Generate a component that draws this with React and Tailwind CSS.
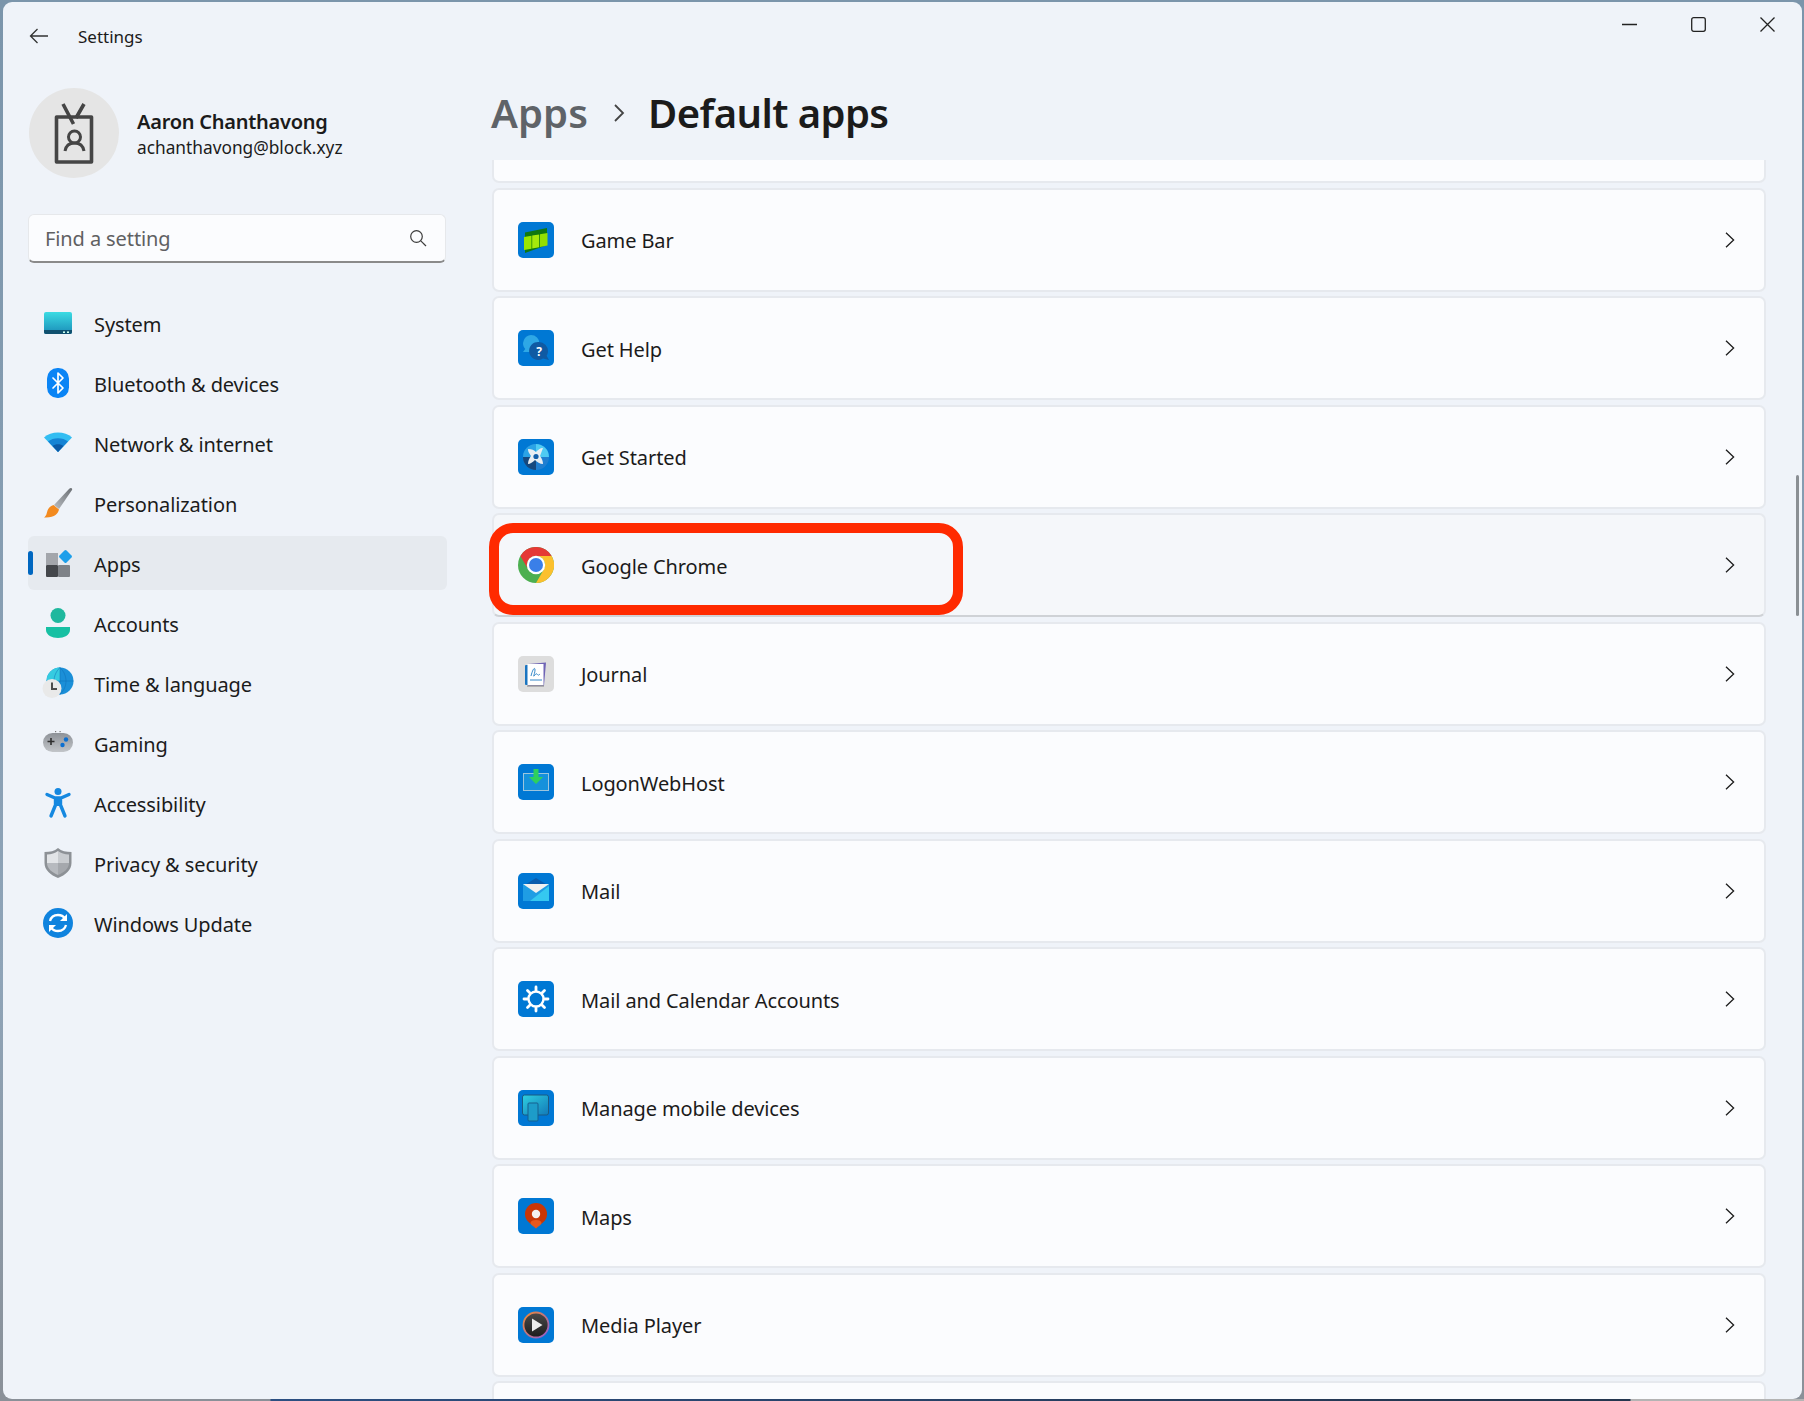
import React from "react";

const S = ({ children, size = 32, box = 32 }) => (
  <svg width={size} height={size} viewBox={`0 0 ${box} ${box}`} className="shrink-0 block">{children}</svg>
);

const SystemIcon = () => (
  <S>
    <defs><linearGradient id="sys" x1="0" y1="0" x2="0" y2="1"><stop offset="0" stopColor="#3bdbe3" /><stop offset="1" stopColor="#1a8db8" /></linearGradient></defs>
    <rect x="2" y="5" width="28" height="22" rx="2" fill="url(#sys)" />
    <path d="M2 23h28v2a2 2 0 0 1-2 2H4a2 2 0 0 1-2-2z" fill="#10506f" />
    <rect x="21" y="24.4" width="2" height="1.6" fill="#cfe" /><rect x="25" y="24.4" width="2" height="1.6" fill="#cfe" />
  </S>
);
const BluetoothIcon = () => (
  <S>
    <rect x="5" y="1" width="22" height="30" rx="10.5" fill="#0a84f5" />
    <path d="M11 11l10 10-5 5V6l5 5-10 10" fill="none" stroke="#fff" strokeWidth="1.7" strokeLinejoin="round" strokeLinecap="round" />
  </S>
);
const WifiIcon = () => (
  <S>
    <path d="M2 10.5C9 3.8 23 3.8 30 10.5L16 25z" fill="#32bdf2" />
    <path d="M6 14.5C11 10 21 10 26 14.5L16 25z" fill="#1583d4" />
    <path d="M10.5 19C13.5 16.6 18.5 16.6 21.5 19L16 25z" fill="#0c5aa6" />
  </S>
);
const BrushIcon = () => (
  <S>
    <defs><linearGradient id="br" x1="1" y1="0" x2="0" y2="1"><stop offset="0" stopColor="#6b6f74" /><stop offset="1" stopColor="#b9bdc2" /></linearGradient></defs>
    <path d="M29 1c1 0 1.500 1 1 2L17 22l-5-4L27 2c.6-.6 1.300-1 2-1z" fill="url(#br)" />
    <path d="M11.500 18l5.500 4.500c-1 4-4 8-13 8H2c3-2 2.500-5 4-8 1-2 3-4 5.500-4.500z" fill="#f38a1f" />
  </S>
);
const AppsIcon = () => (
  <S>
    <rect x="4" y="6" width="12" height="12" fill="#a3a6ab" />
    <rect x="4" y="18" width="12" height="12" rx="1" fill="#44474b" />
    <rect x="16" y="18" width="12" height="12" rx="1" fill="#7e8287" />
    <rect x="18.500" y="4.500" width="10" height="10" rx="1.500" transform="rotate(45 23.500 9.500)" fill="#1d9fea" />
  </S>
);
const AccountIcon = () => (
  <S>
    <circle cx="16" cy="8.500" r="7.500" fill="#1fb89e" />
    <path d="M4 20h24v3c0 5-6 8-12 8S4 28 4 23z" fill="#17c0a3" />
  </S>
);
const TimeIcon = () => (
  <S>
    <circle cx="18" cy="14" r="13.500" fill="#1b8fd8" />
    <path d="M18 .5A13.500 13.500 0 0 0 4.500 14H18z" fill="#35cbe0" />
    <path d="M18 .5v27M4.500 14h27M18 .5c-8 8-8 19 0 27M18 .5c8 8 8 19 0 27" fill="none" stroke="#0f6fb5" strokeWidth=".7" opacity=".7" />
    <circle cx="10" cy="21.500" r="9.500" fill="#e9e9e9" />
    <path d="M10 15.500v6.500h5" fill="none" stroke="#4c4c4c" strokeWidth="2" />
  </S>
);
const GameIcon = () => (
  <S>
    <defs><linearGradient id="gm" x1="0" y1="0" x2="0" y2="1"><stop offset="0" stopColor="#8e9298" /><stop offset="1" stopColor="#c2c5c9" /></linearGradient></defs>
    <rect x="1" y="6" width="30" height="19" rx="9.500" fill="url(#gm)" />
    <path d="M9 11v7M5.500 14.500h7" stroke="#2f2f2f" strokeWidth="1.600" />
    <circle cx="24" cy="12.500" r="2.200" fill="#0d6fd0" /><circle cx="20.500" cy="18" r="2.200" fill="#0d6fd0" />
    <rect x="13" y="4" width="1.200" height="1.200" fill="#777" /><rect x="17.500" y="4" width="1.200" height="1.200" fill="#777" />
  </S>
);
const AccessIcon = () => (
  <S>
    <circle cx="16" cy="4.500" r="3.500" fill="#1588e0" />
    <path d="M5 7.500l8 3.500h6l8-3.500M13.500 11v7L9 29M18.500 11v7L23 29" fill="none" stroke="#1588e0" strokeWidth="3.400" strokeLinecap="round" strokeLinejoin="round" />
    <path d="M13 11h6v8h-6z" fill="#1588e0" />
  </S>
);
const ShieldIcon = () => (
  <S>
    <path d="M16 1c3.500 3 8 4 13.500 4v11c0 7-6 12-13.500 15C8.500 28 2.500 23 2.500 16V5C8 5 12.500 4 16 1z" fill="#8d9196" />
    <path d="M16 4c3 2.500 6.500 3.200 11 3.400V16H16z" fill="#c9ccd0" />
    <path d="M16 4C13 6.500 9.500 7.200 5 7.400V16h11z" fill="#e2e4e7" />
    <path d="M5 16h11v12C10 25.500 5 21.500 5 16z" fill="#b7babf" />
    <path d="M27 16H16v12c6-2.500 11-6.500 11-12z" fill="#a5a8ad" />
  </S>
);
const UpdateIcon = () => (
  <S>
    <circle cx="16" cy="16" r="15" fill="#0f83de" />
    <path d="M8 14c1-4 4.500-6 8-6 3 0 5.500 1.200 7.500 3.800" fill="none" stroke="#fff" strokeWidth="2.300" />
    <path d="M25 7v7h-7z" fill="#fff" />
    <path d="M24 18c-1 4-4.500 6-8 6-3 0-5.500-1.200-7.500-3.800" fill="none" stroke="#fff" strokeWidth="2.300" />
    <path d="M7 25v-7h7z" fill="#fff" />
  </S>
);

const Tile = ({ children, bg = "bg-[#0078d4]" }) => (
  <div className={`w-9 h-9 rounded-[5px] shrink-0 ${bg}`}>
    <S size={36} box={36}>{children}</S>
  </div>
);
const GameBar = () => (
  <Tile>
    <path d="M7 10.500L29 6v17L7 31z" fill="#10780f" />
    <path d="M6 15l7.500-1.300v13L6 28z" fill="#9ae600" />
    <path d="M14.200 13.600l7-1.100v12.700l-7 1.400z" fill="#a6e90c" />
    <path d="M22 12.300l7.500-1.200v12.500L22 25z" fill="#93df00" />
  </Tile>
);
const GetHelp = () => (
  <Tile>
    <path d="M13 5a8.500 8.500 0 0 1 8.500 8.500c0 4.700-3.800 8.500-8.500 8.500H5l2.200-3A8.500 8.500 0 0 1 13 5z" fill="#2ea8e6" />
    <path d="M21 12a9 9 0 0 1 9 9c0 1.800-.5 3.400-1.400 4.800L31 30l-6-1.500A9 9 0 1 1 21 12z" fill="#0f5aa3" />
    <text x="21" y="26" fontSize="12" fontWeight="700" fill="#fff" textAnchor="middle" fontFamily="'Noto Sans',sans-serif">?</text>
  </Tile>
);
const GetStarted = () => (
  <Tile>
    <circle cx="18" cy="18" r="13" fill="#1f7fd1" />
    <path d="M18 5a13 13 0 0 1 13 13H18z" fill="#4fcbf3" />
    <path d="M5 18a13 13 0 0 1 13-13v13z" fill="#2ba3e6" />
    <path d="M5 18h13v13A13 13 0 0 1 5 18z" fill="#15497f" />
    <path d="M10 10c4 0 6 1 8 3 2-2 4-4 7-4-1 3-2 5-3 8 2 3 3 5 3 8-3 0-6-2-8-4-2 2-5 4-7 4 0-3 1-5 3-8-2-3-3-4-3-7z" fill="#e8eef2" />
    <circle cx="18" cy="17.500" r="2.600" fill="#115ea8" />
  </Tile>
);
const Chrome = () => (
  <S size={36} box={36}>
    <circle cx="18" cy="18" r="18" fill="#4caf50" />
    <path d="M2.400 9A18 18 0 0 1 33.600 9H18a9 9 0 0 0-7.800 13.500z" fill="#e53935" />
    <path d="M33.600 9A18 18 0 0 1 18 36l7.800-13.500A9 9 0 0 0 18 9z" fill="#fbc02d" />
    <circle cx="18" cy="18" r="9.200" fill="#fff" />
    <circle cx="18" cy="18" r="7" fill="#3a7fe8" />
  </S>
);
const Journal = () => (
  <Tile bg="bg-[#dddddd]">
    <path d="M10 8l18-1.500-2 23-16 0z" fill="#6f64b5" />
    <rect x="7" y="9" width="5" height="20" rx="1" fill="#1b75c0" />
    <rect x="9.500" y="8" width="16" height="21" fill="#fff" />
    <path d="M13 20c2-8 4-9 4-6s-2 7-1 6 2-3 3-2 1 2 3 0M12 24h12" fill="none" stroke="#3387c9" strokeWidth="1" />
    <path d="M9 30h17" stroke="#777" strokeWidth="1.500" opacity=".6" />
  </Tile>
);
const Logon = () => (
  <Tile>
    <rect x="5.500" y="9.500" width="25" height="17" fill="#1591dc" stroke="#9cc5dd" strokeWidth="1" />
    <path d="M15.500 5h5v8h4.500l-7 7-7-7h4.500z" fill="#2ed05c" />
  </Tile>
);
const Mail = () => (
  <Tile>
    <path d="M18 5l13 8v3H5v-3z" fill="#0a5cae" />
    <rect x="5" y="11" width="26" height="17" fill="#1f9de4" />
    <path d="M5 11h26L18 20z" fill="#f1f1f1" />
    <path d="M31 13v15H12z" fill="#35c8f0" />
  </Tile>
);
const MailCal = () => (
  <Tile>
    <circle cx="18" cy="18" r="7.500" fill="none" stroke="#fff" strokeWidth="2.400" />
    <path d="M18 6v3.500M18 26.500V30M6 18h3.500M26.500 18H30M9.500 9.500l2.500 2.500M24 24l2.500 2.500M9.500 26.500l2.500-2.500M24 12l2.500-2.500" stroke="#fff" strokeWidth="2.800" strokeLinecap="round" />
  </Tile>
);
const Manage = () => (
  <Tile>
    <defs><linearGradient id="mm" x1="0" y1="0" x2="1" y2="1"><stop offset="0" stopColor="#2fd0e0" /><stop offset="1" stopColor="#1279b8" /></linearGradient></defs>
    <rect x="4.500" y="5" width="26" height="20" rx="2" fill="url(#mm)" stroke="#1a5a82" strokeWidth="1" />
    <rect x="10" y="13" width="10" height="18" rx="1" fill="#1d9cc9" stroke="#16608f" strokeWidth="1" />
  </Tile>
);
const Maps = () => (
  <Tile>
    <path d="M18 5a11 11 0 0 1 11 11c0 5-3 8-6 10h-10c-3-2-6-5-6-10A11 11 0 0 1 18 5z" fill="#c93606" />
    <circle cx="18" cy="16" r="4.200" fill="#f4f0ee" />
    <path d="M18 22c3 0 5.500 1 5.500 3s-3 3-5.500 5.500c-2.500-2.500-5.500-3.500-5.500-5.500s2.500-3 5.500-3z" fill="#e8581c" />
  </Tile>
);
const Media = () => (
  <Tile>
    <defs>
      <linearGradient id="mp" x1="0" y1="0" x2="1" y2="1"><stop offset="0" stopColor="#f08a32" /><stop offset="1" stopColor="#8e5cd0" /></linearGradient>
      <linearGradient id="md" x1="0" y1="0" x2="0" y2="1"><stop offset="0" stopColor="#4a4a4a" /><stop offset="1" stopColor="#1c1c1c" /></linearGradient>
    </defs>
    <circle cx="18" cy="18" r="12.500" fill="url(#md)" stroke="url(#mp)" strokeWidth="1.800" />
    <path d="M14 11.500l10.500 6.500L14 24.500z" fill="#ececec" />
  </Tile>
);

const nav = [
  ["System", SystemIcon],
  ["Bluetooth & devices", BluetoothIcon],
  ["Network & internet", WifiIcon],
  ["Personalization", BrushIcon],
  ["Apps", AppsIcon],
  ["Accounts", AccountIcon],
  ["Time & language", TimeIcon],
  ["Gaming", GameIcon],
  ["Accessibility", AccessIcon],
  ["Privacy & security", ShieldIcon],
  ["Windows Update", UpdateIcon],
];
const apps = [
  ["Game Bar", GameBar],
  ["Get Help", GetHelp],
  ["Get Started", GetStarted],
  ["Google Chrome", Chrome],
  ["Journal", Journal],
  ["LogonWebHost", Logon],
  ["Mail", Mail],
  ["Mail and Calendar Accounts", MailCal],
  ["Manage mobile devices", Manage],
  ["Maps", Maps],
  ["Media Player", Media],
];

const Chevron = () => (
  <svg width="10" height="16" viewBox="0 0 10 16" className="shrink-0"><path d="M1 .8L8.600 8 1 15.200" fill="none" stroke="#1c1c1c" strokeWidth="1.300" /></svg>
);

const Card = ({ name, Icon }) => {
  const hot = name === "Google Chrome";
  return (
    <div className={`h-[104px] shrink-0 flex items-center pl-[24px] pr-[29px] rounded-[7px] border-2 ${hot ? "bg-[#f5f7fa] border-[#e6e9ee] border-b-[#cfd2d6]" : "bg-[#fbfcfe] border-[#e6e9ee]"}`}>
      <Icon />
      <span className="ml-[27px] text-[20px] tracking-[-0.1px] text-[#1b1b1b] flex-1 pt-[3px]">{name}</span>
      <Chevron />
    </div>
  );
};

export default function App() {
  return (
    <div className="w-full h-[1401px] overflow-hidden flex flex-col pl-[3px] pt-[2px] pr-[2px] bg-[linear-gradient(180deg,#7b95ab_0%,#8fa4b8_70%,#8a9098_100%)] font-['Noto_Sans',sans-serif]">
      <div className="relative flex flex-1 min-h-0 rounded-[9px] overflow-hidden bg-[#eff3f9]">
        <aside className="w-[489px] shrink-0 flex flex-col">
          <div className="flex items-center h-[68px] pl-[26px]">
            <svg width="20" height="16" viewBox="0 0 20 16"><path d="M19 8H1.500M8.500 1L1.500 8l7 7" fill="none" stroke="#333" strokeWidth="1.300" /></svg>
            <span className="ml-[29px] text-[17px] text-[#1b1b1b] pt-[2px]">Settings</span>
          </div>
          <div className="flex items-center ml-[26px] mt-[18px] h-[90px]">
            <div className="w-[90px] h-[90px] rounded-full bg-[#e5e5e5] flex items-center justify-center shrink-0">
              <svg width="90" height="90" viewBox="0 0 90 90">
                <rect x="27.500" y="29" width="35" height="45" fill="none" stroke="#454545" strokeWidth="3.600" strokeLinejoin="round" />
                <path d="M34 16l10.500 20M55 16l-8 14" fill="none" stroke="#454545" strokeWidth="3.600" />
                <circle cx="45.500" cy="49" r="6" fill="none" stroke="#454545" strokeWidth="3" />
                <path d="M36 63c1-6 5-8 9.500-8s8.500 2 9.500 8" fill="none" stroke="#454545" strokeWidth="3" />
              </svg>
            </div>
            <div className="ml-[18px] flex flex-col pt-[1px]">
              <span className="text-[20px] font-semibold leading-[28px] text-[#1b1b1b] tracking-[-0.25px]">Aaron Chanthavong</span>
              <span className="text-[17.3px] leading-[24px] text-[#1b1b1b]">achanthavong@block.xyz</span>
            </div>
          </div>
          <div className="ml-[25px] mt-[36px] w-[418px] h-[49px] flex items-center justify-between pl-[16px] pr-[18px] rounded-[6px] bg-[#fbfcfe] border border-[#e6e8eb] border-b-2 border-b-[#8a8a8a]">
            <span className="text-[20px] tracking-[-0.1px] text-[#5f6062] pt-[1px]">Find a setting</span>
            <svg width="18" height="18" viewBox="0 0 18 18"><circle cx="7.500" cy="7.500" r="5.800" fill="none" stroke="#3c3c3c" strokeWidth="1.200" /><path d="M11.800 11.800L17 17" stroke="#3c3c3c" strokeWidth="1.200" /></svg>
          </div>
          <nav className="mt-[33px] ml-[25px] w-[419px] flex flex-col gap-[6px]">
            {nav.map(([name, Icon]) => {
              const on = name === "Apps";
              return (
                <div key={name} className={`relative h-[54px] flex items-center pl-[14px] rounded-[6px] ${on ? "bg-[#e6eaef]" : ""}`}>
                  {on && <div className="absolute left-0 top-[15px] w-[5px] h-[24px] rounded-full bg-[#0067c0]" />}
                  <Icon />
                  <span className="ml-[20px] text-[20px] tracking-[-0.1px] text-[#1b1b1b] pt-[3px]">{name}</span>
                </div>
              );
            })}
          </nav>
        </aside>
        <main className="flex-1 min-w-0 flex flex-col">
          <header className="h-[158px] shrink-0 flex justify-between">
            <div className="flex items-center h-[80px] mt-[71px] -ml-[1px] text-[40px]">
              <span className="font-semibold text-[#5f6368] tracking-[0.1px]">Apps</span>
              <svg width="14" height="20" viewBox="0 0 14 20" className="ml-[25px] mr-[21px]"><path d="M2 2l8 8-8 8" fill="none" stroke="#444" strokeWidth="1.800" /></svg>
              <span className="font-semibold text-[#1b1b1b] tracking-[-0.6px]">Default apps</span>
            </div>
            <div className="flex items-start pt-[15px] pr-[27px] gap-[54px]">
              <svg width="15" height="15" viewBox="0 0 15 15"><path d="M0 7.500h15" stroke="#222" strokeWidth="1.300" /></svg>
              <svg width="15" height="15" viewBox="0 0 15 15"><rect x=".7" y=".7" width="13.600" height="13.600" rx="2" fill="none" stroke="#222" strokeWidth="1.300" /></svg>
              <svg width="15" height="15" viewBox="0 0 15 15"><path d="M.5.500l14 14M14.500.500l-14 14" stroke="#222" strokeWidth="1.300" /></svg>
            </div>
          </header>
          <div className="flex-1 min-h-0 overflow-hidden pr-[36px]">
            <div className="-mt-[81px] flex flex-col gap-[4.5px]">
              <div className="h-[104px] shrink-0 rounded-[7px] border-2 border-[#e6e9ee] bg-[#fbfcfe]" />
              {apps.map(([name, Icon]) => <Card key={name} name={name} Icon={Icon} />)}
              <div className="h-[104px] shrink-0 rounded-[7px] border-2 border-[#e6e9ee] bg-[#fbfcfe]" />
            </div>
          </div>
        </main>
        <div className="absolute left-[1793px] top-[473px] w-[3px] h-[141px] rounded-full bg-[#8a8f94]" />
        <div className="absolute left-[486px] top-[521px] w-[474px] h-[92px] rounded-[24px] border-[10px] border-[#ff2a00]" />
      </div>
      <div className="h-[2px] shrink-0 -ml-[3px] -mr-[2px] bg-[linear-gradient(90deg,#8a9098_0px,#8a9098_270px,#2c4f82_271px,#24364f_1500px,#24364f_1630px,#b4b4b4_1631px)]" />
    </div>
  );
}
